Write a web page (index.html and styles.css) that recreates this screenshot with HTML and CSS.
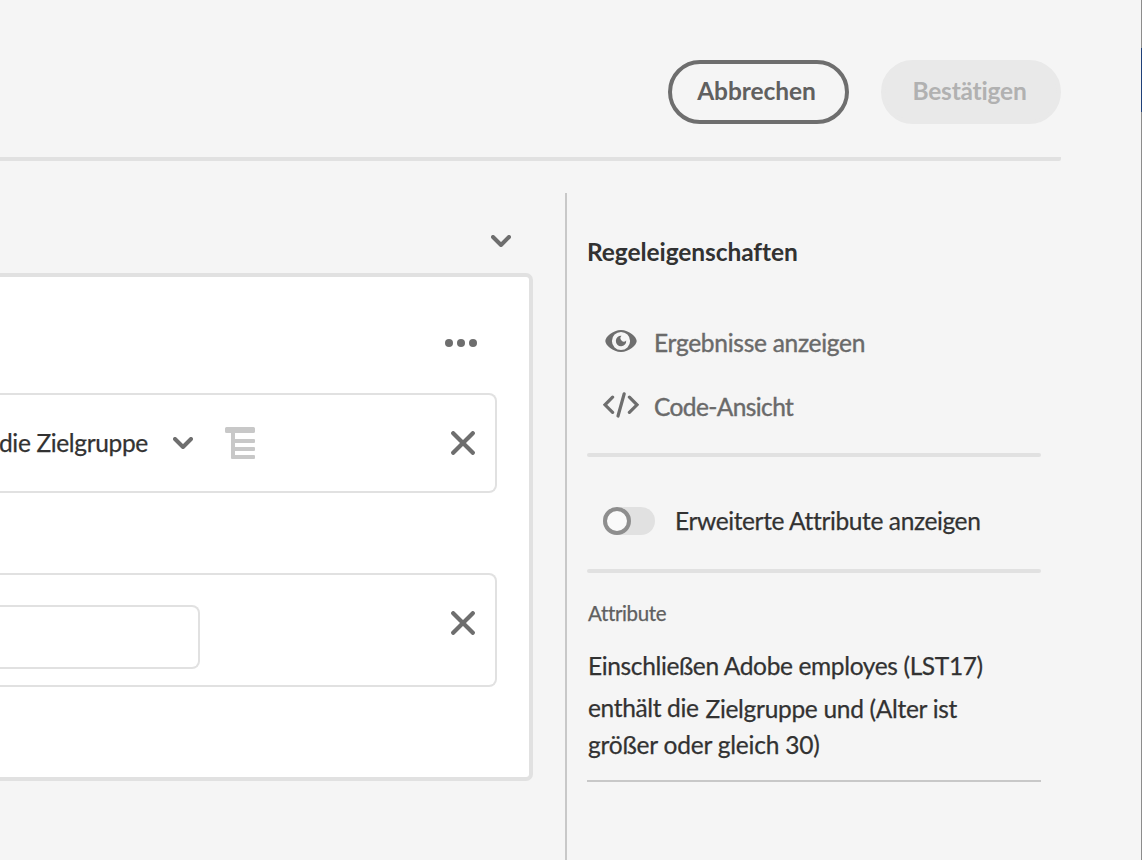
FILE: index.html
```html
<!DOCTYPE html>
<html lang="de">
<head>
<meta charset="utf-8">
<title>Regeleigenschaften</title>
<link rel="stylesheet" href="styles.css">
</head>
<body>
<div class="app">
  <div class="page">
    <header class="header">
      <button class="btn btn-cancel">Abbrechen</button>
      <button class="btn btn-confirm" disabled>Bestätigen</button>
    </header>
    <div class="content">
      <main class="builder">
        <div class="builder-head">
          <svg class="chevron" viewBox="0 0 20 12"><path d="M2 2l8 8 8-8"/></svg>
        </div>
        <section class="card">
          <div class="card-menu">
            <svg class="dots" viewBox="0 0 32 8"><circle cx="4" cy="4" r="4"/><circle cx="16" cy="4" r="4"/><circle cx="28" cy="4" r="4"/></svg>
          </div>
          <div class="rule rule-audience">
            <span class="rule-label">die Zielgruppe</span>
            <svg class="chevron" viewBox="0 0 20 12"><path d="M2 2l8 8 8-8"/></svg>
            <svg class="tree" viewBox="0 0 30 32"><path d="M1.500 0h27a1.500 1.500 0 0 1 1.500 1.500v3a1.500 1.500 0 0 1-1.500 1.500H10v6h19a1 1 0 0 1 1 1v2a1 1 0 0 1-1 1H10v4h19a1 1 0 0 1 1 1v2a1 1 0 0 1-1 1H10v4h19a1 1 0 0 1 1 1v2a1 1 0 0 1-1 1H7a1 1 0 0 1-1-1V6H1.500A1.500 1.500 0 0 1 0 4.500v-3A1.500 1.500 0 0 1 1.500 0z"/></svg>
            <svg class="close" viewBox="0 0 24 24"><path d="M2.200 2.200l19.600 19.600M21.800 2.200L2.200 21.800"/></svg>
          </div>
          <div class="rule rule-value">
            <input class="value" type="text">
            <svg class="close" viewBox="0 0 24 24"><path d="M2.200 2.200l19.600 19.600M21.800 2.200L2.200 21.800"/></svg>
          </div>
        </section>
      </main>
      <aside class="side">
        <h2 class="title">Regeleigenschaften</h2>
        <div class="action">
          <svg class="icon" viewBox="0 0 36 28"><path fill="#6e6e6e" fill-rule="evenodd" d="M18 3C10 3 2.300 10 2.300 14s7.700 11 15.700 11 15.700-7 15.700-11S26 3 18 3zm0 1.900a9.100 9.100 0 1 1 0 18.200a9.100 9.100 0 0 1 0-18.200z"/><path fill="#6e6e6e" d="M18.500 8.800A5.200 5.200 0 1 0 23.200 13.500a2.700 2.700 0 1 1-4.700-4.700z"/></svg>
          <span class="results">Ergebnisse anzeigen</span>
        </div>
        <div class="action">
          <svg class="icon" viewBox="0 0 36 28"><path class="code-stroke" d="M9.600 6.200L2 13.800l7.600 7.600M26.400 6.200L34 13.800l-7.600 7.600"/><path class="code-slash" d="M21.200 2.800l-6.200 22.200"/></svg>
          <span class="code">Code-Ansicht</span>
        </div>
        <hr class="rule-line">
        <label class="toggle">
          <span class="switch"><span class="knob"></span></span>
          <span class="toggle-label">Erweiterte Attribute anzeigen</span>
        </label>
        <hr class="rule-line">
        <h3 class="caption">Attribute</h3>
        <div class="summary">
          <div class="line-one">Einschließen Adobe employes (LST17)</div>
          <div class="line-two"><span class="verb">enthält die</span><span class="group">Zielgruppe und (Alter ist</span></div>
          <div class="line-three">größer oder gleich 30)</div>
        </div>
      </aside>
    </div>
  </div>
  <div class="edge"><div class="edge-mark"></div></div>
</div>
</body>
</html>
```
FILE: styles.css
```css
* { box-sizing: border-box; }

body {
  margin: 0;
  background: #f5f5f5;
  color: #323232;
  font: 24.5px/36px Lato, "Noto Sans", sans-serif;
  white-space: nowrap;
}

svg { display: block; flex: none; }

.app { display: flex; height: 860px; overflow: hidden; }
.page { flex: 1; display: flex; flex-direction: column; }

.edge { width: 1px; padding-top: 48px; background: #8c8c8c; }
.edge-mark { height: 64px; background: #1f4078; }

.header {
  display: flex;
  justify-content: flex-end;
  gap: 32px;
  width: 1061px;
  height: 161px;
  padding-top: 60px;
  border-bottom: 4px solid #e1e1e1;
  border-bottom-right-radius: 2px;
}

.btn {
  height: 64px;
  padding: 0 0 3px;
  border: 4px solid #6e6e6e;
  border-radius: 32px;
  background: transparent;
  color: #606060;
  font: 700 24.5px/36px Lato, "Noto Sans", sans-serif;
}
.btn-cancel { width: 181px; padding-right: 4px; letter-spacing: -0.05px; }
.btn-confirm {
  width: 180px;
  padding-right: 3px;
  border-color: #e9e9e9;
  background: #e9e9e9;
  color: #b1b1b1;
  letter-spacing: -0.2px;
}

.content { flex: 1; display: flex; padding-top: 32px; }

.builder { width: 567px; border-right: 2px solid #c8c8c8; }
.builder-head {
  display: flex;
  justify-content: flex-end;
  height: 80px;
  padding: 42px 54px 0 0;
}

.chevron {
  width: 20px;
  height: 12px;
  fill: none;
  stroke: #6e6e6e;
  stroke-width: 4;
  stroke-linecap: round;
  stroke-linejoin: round;
}

.card {
  width: 533px;
  height: 508px;
  padding-right: 32px;
  border: 4px solid #e1e1e1;
  border-left: 0;
  border-radius: 0 7px 7px 0;
  background: #fff;
}
.card-menu {
  display: flex;
  justify-content: flex-end;
  height: 116px;
  padding: 62px 20px 0 0;
}
.dots { width: 32px; height: 8px; fill: #6e6e6e; }

.rule {
  display: flex;
  align-items: center;
  border: 2px solid #e1e1e1;
  border-left: 0;
  border-radius: 0 8px 8px 0;
}
.rule-audience { height: 100px; }
.rule-label {
  width: 174px;
  margin-left: -1px;
  letter-spacing: -0.35px;
  -webkit-text-stroke: 0.25px;
}
.tree { width: 30px; height: 32px; margin-left: 32px; fill: #c8c8c8; }

.close {
  width: 24px;
  height: 24px;
  margin: 0 20px 0 auto;
  fill: none;
  stroke: #6e6e6e;
  stroke-width: 4.2;
  stroke-linecap: round;
}

.rule-value { align-items: flex-start; height: 114px; margin-top: 80px; padding-top: 30px; }
.rule-value .close { margin-top: 6px; }
.value {
  width: 200px;
  height: 64px;
  border: 2px solid #e1e1e1;
  border-left: 0;
  border-radius: 0 8px 8px 0;
  background: #fff;
}

.side { width: 474px; padding: 41px 0 0 20px; }

.title {
  margin: 0 0 54px;
  font-size: 24.5px;
  font-weight: 700;
  color: #323232;
  letter-spacing: -0.08px;
}
.action {
  display: flex;
  align-items: center;
  height: 36px;
  margin-bottom: 28px;
  padding-left: 16px;
  color: #6a6a6a;
  -webkit-text-stroke: 0.4px #6a6a6a;
}
.icon { width: 36px; height: 28px; margin: -2px 15px 0 0; }
.code-stroke, .code-slash {
  fill: none;
  stroke: #6e6e6e;
  stroke-width: 3.2;
  stroke-linecap: round;
}
.results { padding-top: 1px; letter-spacing: -0.27px; }
.code { padding-top: 1px; letter-spacing: -0.6px; }

.rule-line {
  height: 4px;
  margin: 0;
  border: 0;
  border-radius: 2px;
  background: #e1e1e1;
}
.action + .rule-line { margin-top: 29px; }

.toggle {
  display: flex;
  align-items: center;
  height: 112px;
  padding: 17px 0 1px 16px;
  -webkit-text-stroke: 0.25px;
}
.switch {
  width: 52px;
  height: 28px;
  margin-right: 20px;
  border-radius: 14px;
  background: #e1e1e1;
}
.knob {
  display: block;
  width: 28px;
  height: 28px;
  border: 4px solid #8e8e8e;
  border-radius: 50%;
  background: #fafafa;
}
.toggle-label { letter-spacing: -0.38px; }

.caption {
  margin: 22px 0 0;
  padding-left: 1px;
  font-size: 20.5px;
  font-weight: 400;
  color: #606060;
  letter-spacing: -0.35px;
  -webkit-text-stroke: 0.25px;
}

.summary {
  height: 151px;
  padding: 17px 0 0 1px;
  border-bottom: 2px solid #c8c8c8;
  -webkit-text-stroke: 0.25px;
}
.line-one { height: 42px; letter-spacing: -0.36px; }
.line-two { display: flex; gap: 7px; height: 37px; }
.verb { letter-spacing: -0.36px; }
.group { padding-top: 1px; letter-spacing: -0.3px; }
.line-three { letter-spacing: -0.2px; }
```
